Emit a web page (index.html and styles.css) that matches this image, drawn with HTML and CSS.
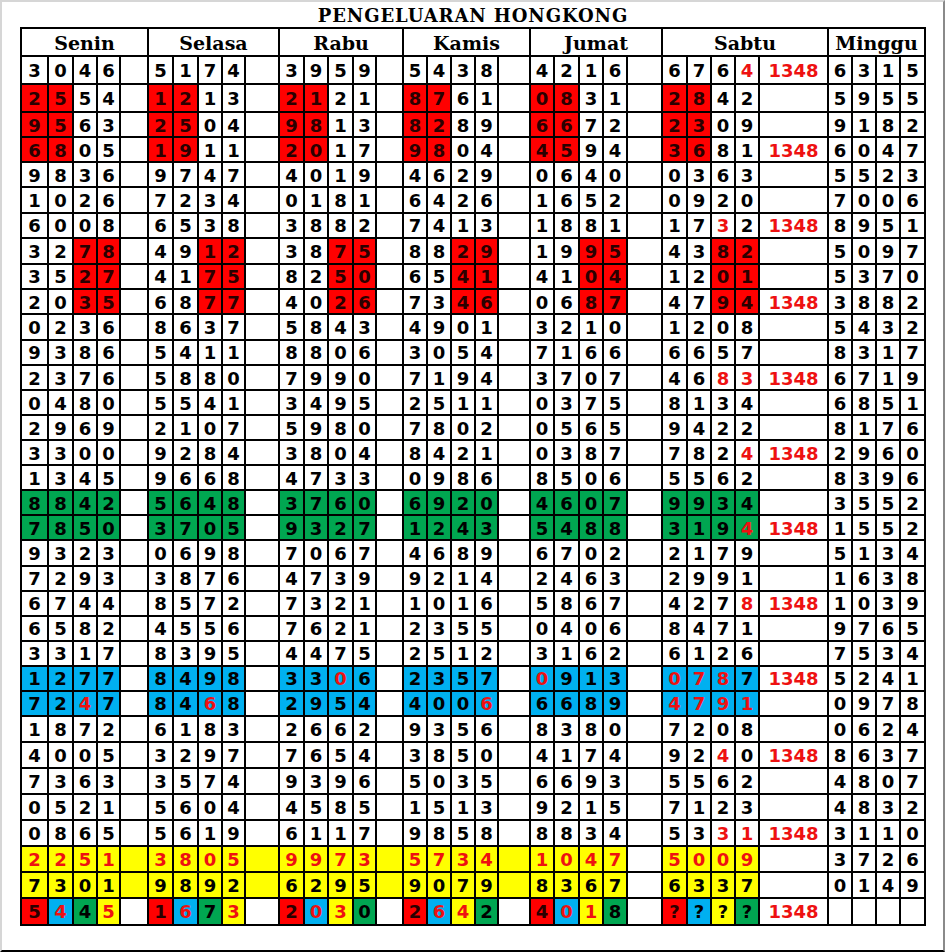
FILE: index.html
```html
<!DOCTYPE html>
<html>
<head>
<meta charset="utf-8">
<title>Pengeluaran Hongkong</title>
<link rel="stylesheet" href="styles.css">
</head>
<body>
<div class="frame">
<div class="title">PENGELUARAN HONGKONG</div>
<div class="grid">
<div class="h">Senin</div><div class="h">Selasa</div><div class="h">Rabu</div><div class="h">Kamis</div><div class="h">Jumat</div><div class="h">Sabtu</div><div class="h h4">Minggu</div>

<div>3</div><div>0</div><div>4</div><div>6</div><div></div>
<div>5</div><div>1</div><div>7</div><div>4</div><div></div>
<div>3</div><div>9</div><div>5</div><div>9</div><div></div>
<div>5</div><div>4</div><div>3</div><div>8</div><div></div>
<div>4</div><div>2</div><div>1</div><div>6</div><div></div>
<div>6</div><div>7</div><div>6</div><div class="t">4</div><div class="k">1348</div>
<div>6</div><div>3</div><div>1</div><div>5</div>

<div class="r">2</div><div class="r">5</div><div>5</div><div>4</div><div></div>
<div class="r">1</div><div class="r">2</div><div>1</div><div>3</div><div></div>
<div class="r">2</div><div class="r">1</div><div>2</div><div>1</div><div></div>
<div class="r">8</div><div class="r">7</div><div>6</div><div>1</div><div></div>
<div class="r">0</div><div class="r">8</div><div>3</div><div>1</div><div></div>
<div class="r">2</div><div class="r">8</div><div>4</div><div>2</div><div></div>
<div>5</div><div>9</div><div>5</div><div>5</div>

<div class="r">9</div><div class="r">5</div><div>6</div><div>3</div><div></div>
<div class="r">2</div><div class="r">5</div><div>0</div><div>4</div><div></div>
<div class="r">9</div><div class="r">8</div><div>1</div><div>3</div><div></div>
<div class="r">8</div><div class="r">2</div><div>8</div><div>9</div><div></div>
<div class="r">6</div><div class="r">6</div><div>7</div><div>2</div><div></div>
<div class="r">2</div><div class="r">3</div><div>0</div><div>9</div><div></div>
<div>9</div><div>1</div><div>8</div><div>2</div>

<div class="r">6</div><div class="r">8</div><div>0</div><div>5</div><div></div>
<div class="r">1</div><div class="r">9</div><div>1</div><div>1</div><div></div>
<div class="r">2</div><div class="r">0</div><div>1</div><div>7</div><div></div>
<div class="r">9</div><div class="r">8</div><div>0</div><div>4</div><div></div>
<div class="r">4</div><div class="r">5</div><div>9</div><div>4</div><div></div>
<div class="r">3</div><div class="r">6</div><div>8</div><div>1</div><div class="k">1348</div>
<div>6</div><div>0</div><div>4</div><div>7</div>

<div>9</div><div>8</div><div>3</div><div>6</div><div></div>
<div>9</div><div>7</div><div>4</div><div>7</div><div></div>
<div>4</div><div>0</div><div>1</div><div>9</div><div></div>
<div>4</div><div>6</div><div>2</div><div>9</div><div></div>
<div>0</div><div>6</div><div>4</div><div>0</div><div></div>
<div>0</div><div>3</div><div>6</div><div>3</div><div></div>
<div>5</div><div>5</div><div>2</div><div>3</div>

<div>1</div><div>0</div><div>2</div><div>6</div><div></div>
<div>7</div><div>2</div><div>3</div><div>4</div><div></div>
<div>0</div><div>1</div><div>8</div><div>1</div><div></div>
<div>6</div><div>4</div><div>2</div><div>6</div><div></div>
<div>1</div><div>6</div><div>5</div><div>2</div><div></div>
<div>0</div><div>9</div><div>2</div><div>0</div><div></div>
<div>7</div><div>0</div><div>0</div><div>6</div>

<div>6</div><div>0</div><div>0</div><div>8</div><div></div>
<div>6</div><div>5</div><div>3</div><div>8</div><div></div>
<div>3</div><div>8</div><div>8</div><div>2</div><div></div>
<div>7</div><div>4</div><div>1</div><div>3</div><div></div>
<div>1</div><div>8</div><div>8</div><div>1</div><div></div>
<div>1</div><div>7</div><div class="t">3</div><div>2</div><div class="k">1348</div>
<div>8</div><div>9</div><div>5</div><div>1</div>

<div>3</div><div>2</div><div class="r">7</div><div class="r">8</div><div></div>
<div>4</div><div>9</div><div class="r">1</div><div class="r">2</div><div></div>
<div>3</div><div>8</div><div class="r">7</div><div class="r">5</div><div></div>
<div>8</div><div>8</div><div class="r">2</div><div class="r">9</div><div></div>
<div>1</div><div>9</div><div class="r">9</div><div class="r">5</div><div></div>
<div>4</div><div>3</div><div class="r">8</div><div class="r">2</div><div></div>
<div>5</div><div>0</div><div>9</div><div>7</div>

<div>3</div><div>5</div><div class="r">2</div><div class="r">7</div><div></div>
<div>4</div><div>1</div><div class="r">7</div><div class="r">5</div><div></div>
<div>8</div><div>2</div><div class="r">5</div><div class="r">0</div><div></div>
<div>6</div><div>5</div><div class="r">4</div><div class="r">1</div><div></div>
<div>4</div><div>1</div><div class="r">0</div><div class="r">4</div><div></div>
<div>1</div><div>2</div><div class="r">0</div><div class="r">1</div><div></div>
<div>5</div><div>3</div><div>7</div><div>0</div>

<div>2</div><div>0</div><div class="r">3</div><div class="r">5</div><div></div>
<div>6</div><div>8</div><div class="r">7</div><div class="r">7</div><div></div>
<div>4</div><div>0</div><div class="r">2</div><div class="r">6</div><div></div>
<div>7</div><div>3</div><div class="r">4</div><div class="r">6</div><div></div>
<div>0</div><div>6</div><div class="r">8</div><div class="r">7</div><div></div>
<div>4</div><div>7</div><div class="r">9</div><div class="r">4</div><div class="k">1348</div>
<div>3</div><div>8</div><div>8</div><div>2</div>

<div>0</div><div>2</div><div>3</div><div>6</div><div></div>
<div>8</div><div>6</div><div>3</div><div>7</div><div></div>
<div>5</div><div>8</div><div>4</div><div>3</div><div></div>
<div>4</div><div>9</div><div>0</div><div>1</div><div></div>
<div>3</div><div>2</div><div>1</div><div>0</div><div></div>
<div>1</div><div>2</div><div>0</div><div>8</div><div></div>
<div>5</div><div>4</div><div>3</div><div>2</div>

<div>9</div><div>3</div><div>8</div><div>6</div><div></div>
<div>5</div><div>4</div><div>1</div><div>1</div><div></div>
<div>8</div><div>8</div><div>0</div><div>6</div><div></div>
<div>3</div><div>0</div><div>5</div><div>4</div><div></div>
<div>7</div><div>1</div><div>6</div><div>6</div><div></div>
<div>6</div><div>6</div><div>5</div><div>7</div><div></div>
<div>8</div><div>3</div><div>1</div><div>7</div>

<div>2</div><div>3</div><div>7</div><div>6</div><div></div>
<div>5</div><div>8</div><div>8</div><div>0</div><div></div>
<div>7</div><div>9</div><div>9</div><div>0</div><div></div>
<div>7</div><div>1</div><div>9</div><div>4</div><div></div>
<div>3</div><div>7</div><div>0</div><div>7</div><div></div>
<div>4</div><div>6</div><div class="t">8</div><div class="t">3</div><div class="k">1348</div>
<div>6</div><div>7</div><div>1</div><div>9</div>

<div>0</div><div>4</div><div>8</div><div>0</div><div></div>
<div>5</div><div>5</div><div>4</div><div>1</div><div></div>
<div>3</div><div>4</div><div>9</div><div>5</div><div></div>
<div>2</div><div>5</div><div>1</div><div>1</div><div></div>
<div>0</div><div>3</div><div>7</div><div>5</div><div></div>
<div>8</div><div>1</div><div>3</div><div>4</div><div></div>
<div>6</div><div>8</div><div>5</div><div>1</div>

<div>2</div><div>9</div><div>6</div><div>9</div><div></div>
<div>2</div><div>1</div><div>0</div><div>7</div><div></div>
<div>5</div><div>9</div><div>8</div><div>0</div><div></div>
<div>7</div><div>8</div><div>0</div><div>2</div><div></div>
<div>0</div><div>5</div><div>6</div><div>5</div><div></div>
<div>9</div><div>4</div><div>2</div><div>2</div><div></div>
<div>8</div><div>1</div><div>7</div><div>6</div>

<div>3</div><div>3</div><div>0</div><div>0</div><div></div>
<div>9</div><div>2</div><div>8</div><div>4</div><div></div>
<div>3</div><div>8</div><div>0</div><div>4</div><div></div>
<div>8</div><div>4</div><div>2</div><div>1</div><div></div>
<div>0</div><div>3</div><div>8</div><div>7</div><div></div>
<div>7</div><div>8</div><div>2</div><div class="t">4</div><div class="k">1348</div>
<div>2</div><div>9</div><div>6</div><div>0</div>

<div>1</div><div>3</div><div>4</div><div>5</div><div></div>
<div>9</div><div>6</div><div>6</div><div>8</div><div></div>
<div>4</div><div>7</div><div>3</div><div>3</div><div></div>
<div>0</div><div>9</div><div>8</div><div>6</div><div></div>
<div>8</div><div>5</div><div>0</div><div>6</div><div></div>
<div>5</div><div>5</div><div>6</div><div>2</div><div></div>
<div>8</div><div>3</div><div>9</div><div>6</div>

<div class="g">8</div><div class="g">8</div><div class="g">4</div><div class="g">2</div><div></div>
<div class="g">5</div><div class="g">6</div><div class="g">4</div><div class="g">8</div><div></div>
<div class="g">3</div><div class="g">7</div><div class="g">6</div><div class="g">0</div><div></div>
<div class="g">6</div><div class="g">9</div><div class="g">2</div><div class="g">0</div><div></div>
<div class="g">4</div><div class="g">6</div><div class="g">0</div><div class="g">7</div><div></div>
<div class="g">9</div><div class="g">9</div><div class="g">3</div><div class="g">4</div><div></div>
<div>3</div><div>5</div><div>5</div><div>2</div>

<div class="g">7</div><div class="g">8</div><div class="g">5</div><div class="g">0</div><div></div>
<div class="g">3</div><div class="g">7</div><div class="g">0</div><div class="g">5</div><div></div>
<div class="g">9</div><div class="g">3</div><div class="g">2</div><div class="g">7</div><div></div>
<div class="g">1</div><div class="g">2</div><div class="g">4</div><div class="g">3</div><div></div>
<div class="g">5</div><div class="g">4</div><div class="g">8</div><div class="g">8</div><div></div>
<div class="g">3</div><div class="g">1</div><div class="g">9</div><div class="g t">4</div><div class="k">1348</div>
<div>1</div><div>5</div><div>5</div><div>2</div>

<div>9</div><div>3</div><div>2</div><div>3</div><div></div>
<div>0</div><div>6</div><div>9</div><div>8</div><div></div>
<div>7</div><div>0</div><div>6</div><div>7</div><div></div>
<div>4</div><div>6</div><div>8</div><div>9</div><div></div>
<div>6</div><div>7</div><div>0</div><div>2</div><div></div>
<div>2</div><div>1</div><div>7</div><div>9</div><div></div>
<div>5</div><div>1</div><div>3</div><div>4</div>

<div>7</div><div>2</div><div>9</div><div>3</div><div></div>
<div>3</div><div>8</div><div>7</div><div>6</div><div></div>
<div>4</div><div>7</div><div>3</div><div>9</div><div></div>
<div>9</div><div>2</div><div>1</div><div>4</div><div></div>
<div>2</div><div>4</div><div>6</div><div>3</div><div></div>
<div>2</div><div>9</div><div>9</div><div>1</div><div></div>
<div>1</div><div>6</div><div>3</div><div>8</div>

<div>6</div><div>7</div><div>4</div><div>4</div><div></div>
<div>8</div><div>5</div><div>7</div><div>2</div><div></div>
<div>7</div><div>3</div><div>2</div><div>1</div><div></div>
<div>1</div><div>0</div><div>1</div><div>6</div><div></div>
<div>5</div><div>8</div><div>6</div><div>7</div><div></div>
<div>4</div><div>2</div><div>7</div><div class="t">8</div><div class="k">1348</div>
<div>1</div><div>0</div><div>3</div><div>9</div>

<div>6</div><div>5</div><div>8</div><div>2</div><div></div>
<div>4</div><div>5</div><div>5</div><div>6</div><div></div>
<div>7</div><div>6</div><div>2</div><div>1</div><div></div>
<div>2</div><div>3</div><div>5</div><div>5</div><div></div>
<div>0</div><div>4</div><div>0</div><div>6</div><div></div>
<div>8</div><div>4</div><div>7</div><div>1</div><div></div>
<div>9</div><div>7</div><div>6</div><div>5</div>

<div>3</div><div>3</div><div>1</div><div>7</div><div></div>
<div>8</div><div>3</div><div>9</div><div>5</div><div></div>
<div>4</div><div>4</div><div>7</div><div>5</div><div></div>
<div>2</div><div>5</div><div>1</div><div>2</div><div></div>
<div>3</div><div>1</div><div>6</div><div>2</div><div></div>
<div>6</div><div>1</div><div>2</div><div>6</div><div></div>
<div>7</div><div>5</div><div>3</div><div>4</div>

<div class="b">1</div><div class="b">2</div><div class="b">7</div><div class="b">7</div><div></div>
<div class="b">8</div><div class="b">4</div><div class="b">9</div><div class="b">8</div><div></div>
<div class="b">3</div><div class="b">3</div><div class="b t">0</div><div class="b">6</div><div></div>
<div class="b">2</div><div class="b">3</div><div class="b">5</div><div class="b">7</div><div></div>
<div class="b t">0</div><div class="b">9</div><div class="b">1</div><div class="b">3</div><div></div>
<div class="b t">0</div><div class="b t">7</div><div class="b t">8</div><div class="b">7</div><div class="k">1348</div>
<div>5</div><div>2</div><div>4</div><div>1</div>

<div class="b">7</div><div class="b">2</div><div class="b t">4</div><div class="b">7</div><div></div>
<div class="b">8</div><div class="b">4</div><div class="b t">6</div><div class="b">8</div><div></div>
<div class="b">2</div><div class="b">9</div><div class="b">5</div><div class="b">4</div><div></div>
<div class="b">4</div><div class="b">0</div><div class="b">0</div><div class="b t">6</div><div></div>
<div class="b">6</div><div class="b">6</div><div class="b">8</div><div class="b">9</div><div></div>
<div class="b t">4</div><div class="b t">7</div><div class="b t">9</div><div class="b t">1</div><div></div>
<div>0</div><div>9</div><div>7</div><div>8</div>

<div>1</div><div>8</div><div>7</div><div>2</div><div></div>
<div>6</div><div>1</div><div>8</div><div>3</div><div></div>
<div>2</div><div>6</div><div>6</div><div>2</div><div></div>
<div>9</div><div>3</div><div>5</div><div>6</div><div></div>
<div>8</div><div>3</div><div>8</div><div>0</div><div></div>
<div>7</div><div>2</div><div>0</div><div>8</div><div></div>
<div>0</div><div>6</div><div>2</div><div>4</div>

<div>4</div><div>0</div><div>0</div><div>5</div><div></div>
<div>3</div><div>2</div><div>9</div><div>7</div><div></div>
<div>7</div><div>6</div><div>5</div><div>4</div><div></div>
<div>3</div><div>8</div><div>5</div><div>0</div><div></div>
<div>4</div><div>1</div><div>7</div><div>4</div><div></div>
<div>9</div><div>2</div><div class="t">4</div><div>0</div><div class="k">1348</div>
<div>8</div><div>6</div><div>3</div><div>7</div>

<div>7</div><div>3</div><div>6</div><div>3</div><div></div>
<div>3</div><div>5</div><div>7</div><div>4</div><div></div>
<div>9</div><div>3</div><div>9</div><div>6</div><div></div>
<div>5</div><div>0</div><div>3</div><div>5</div><div></div>
<div>6</div><div>6</div><div>9</div><div>3</div><div></div>
<div>5</div><div>5</div><div>6</div><div>2</div><div></div>
<div>4</div><div>8</div><div>0</div><div>7</div>

<div>0</div><div>5</div><div>2</div><div>1</div><div></div>
<div>5</div><div>6</div><div>0</div><div>4</div><div></div>
<div>4</div><div>5</div><div>8</div><div>5</div><div></div>
<div>1</div><div>5</div><div>1</div><div>3</div><div></div>
<div>9</div><div>2</div><div>1</div><div>5</div><div></div>
<div>7</div><div>1</div><div>2</div><div>3</div><div></div>
<div>4</div><div>8</div><div>3</div><div>2</div>

<div>0</div><div>8</div><div>6</div><div>5</div><div></div>
<div>5</div><div>6</div><div>1</div><div>9</div><div></div>
<div>6</div><div>1</div><div>1</div><div>7</div><div></div>
<div>9</div><div>8</div><div>5</div><div>8</div><div></div>
<div>8</div><div>8</div><div>3</div><div>4</div><div></div>
<div>5</div><div>3</div><div class="t">3</div><div class="t">1</div><div class="k">1348</div>
<div>3</div><div>1</div><div>1</div><div>0</div>

<div class="y t">2</div><div class="y t">2</div><div class="y t">5</div><div class="y t">1</div><div class="y"></div>
<div class="y t">3</div><div class="y t">8</div><div class="y t">0</div><div class="y t">5</div><div class="y"></div>
<div class="y t">9</div><div class="y t">9</div><div class="y t">7</div><div class="y t">3</div><div class="y"></div>
<div class="y t">5</div><div class="y t">7</div><div class="y t">3</div><div class="y t">4</div><div class="y"></div>
<div class="y t">1</div><div class="y t">0</div><div class="y t">4</div><div class="y t">7</div><div></div>
<div class="y t">5</div><div class="y t">0</div><div class="y t">0</div><div class="y t">9</div><div></div>
<div>3</div><div>7</div><div>2</div><div>6</div>

<div class="y">7</div><div class="y">3</div><div class="y">0</div><div class="y">1</div><div class="y"></div>
<div class="y">9</div><div class="y">8</div><div class="y">9</div><div class="y">2</div><div class="y"></div>
<div class="y">6</div><div class="y">2</div><div class="y">9</div><div class="y">5</div><div class="y"></div>
<div class="y">9</div><div class="y">0</div><div class="y">7</div><div class="y">9</div><div class="y"></div>
<div class="y">8</div><div class="y">3</div><div class="y">6</div><div class="y">7</div><div></div>
<div class="y">6</div><div class="y">3</div><div class="y">3</div><div class="y">7</div><div></div>
<div>0</div><div>1</div><div>4</div><div>9</div>

<div class="r">5</div><div class="b t">4</div><div class="g">4</div><div class="y t">5</div><div></div>
<div class="r">1</div><div class="b t">6</div><div class="g">7</div><div class="y t">3</div><div></div>
<div class="r">2</div><div class="b t">0</div><div class="y t">3</div><div class="g">0</div><div></div>
<div class="r">2</div><div class="b t">6</div><div class="y t">4</div><div class="g">2</div><div></div>
<div class="r">4</div><div class="b t">0</div><div class="y t">1</div><div class="g">8</div><div></div>
<div class="r">?</div><div class="b">?</div><div class="y">?</div><div class="g">?</div><div class="k">1348</div>
<div></div><div></div><div></div><div></div>
</div>
</div>
</body>
</html>
```

FILE: styles.css
```css
html, body {
  margin: 0;
  padding: 0;
  background: #ffffff;
}

.frame {
  width: 945px;
  height: 952px;
  box-sizing: border-box;
  border-left: 2px solid #d6d6d6;
  border-top: 2px solid #d6d6d6;
  border-right: 2px solid #8a8a8a;
  border-bottom: 2px solid #000000;
  padding-left: 18px;
  overflow: hidden;
}

.title {
  width: 906px;
  height: 25px;
  line-height: 27px;
  text-align: center;
  font-family: "DejaVu Serif", serif;
  font-weight: bold;
  font-size: 18px;
  letter-spacing: 0.9px;
  color: #000;
}

.grid {
  display: grid;
  width: 906px;
  box-sizing: border-box;
  padding: 2px;
  gap: 2px;
  background: #000000;
  grid-template-columns:
    25px 23px 22px 21px 26px
    23px 23px 22px 21px 32px
    23px 22px 23px 21px 25px
    22px 22px 22px 21px 30px
    22px 23px 22px 22px 33px
    23px 22px 22px 22px 67px
    22px 22px 22px 23px;
  grid-template-rows:
    26px 26px 26px 23px 23px
    repeat(8, 23.4px)
    repeat(14, 23.05px)
    repeat(4, 24px)
    repeat(4, 24.2px);
}

.grid > div {
  background: #ffffff;
  display: flex;
  align-items: center;
  justify-content: center;
  padding-top: 2px;
  box-sizing: border-box;
  font-family: "DejaVu Sans", sans-serif;
  font-weight: bold;
  font-size: 18px;
  line-height: 1;
  color: #000000;
}

.grid > .h {
  grid-column: span 5;
  font-family: "DejaVu Serif", serif;
  font-size: 19px;
}

.grid > .h4 {
  grid-column: span 4;
}

.grid > .r {
  background: #ff0000;
  color: #2a0000;
}

.grid > .g {
  background: #00a651;
}

.grid > .b {
  background: #00b0f0;
}

.grid > .y {
  background: #ffff00;
}

.grid > .t {
  color: #ee1111;
}

.grid > .k {
  color: #ee1111;
}
```
